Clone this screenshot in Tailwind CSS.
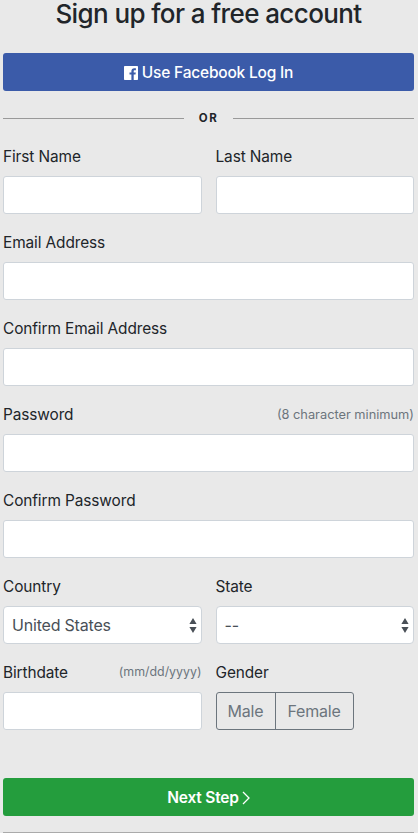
<!DOCTYPE html>
<html lang="en">
<head>
<meta charset="UTF-8">
<title>Sign up</title>
<script src="https://cdn.jsdelivr.net/npm/@tailwindcss/browser@4"></script>
</head>
<body class="bg-[#e9e9e9] overflow-hidden font-['Inter',sans-serif] text-[#212529]">
<div class="w-[418px] h-[833px] overflow-hidden pl-[3px] pr-[4px]">
  <h1 class="text-[26px] leading-[28px] font-medium text-center m-0 tracking-[-0.6px]">Sign up for a free account</h1>

  <button class="mt-[25px] w-full h-[38px] pt-[1px] rounded-[3px] bg-[#3b5ba9] text-white text-[15.5px] font-medium flex items-center justify-center gap-[4px] tracking-[-0.2px]">
    <svg width="14" height="14" viewBox="0 0 14 14"><path fill="#fff" d="M0.8 0h12.4a.8.8 0 0 1 .8.8v12.4a.8.8 0 0 1-.8.8H9.7V8.6h1.8l.3-2.1H9.7V5.2c0-.6.2-1 1-1h1.2V2.3c-.2 0-.9-.1-1.7-.1-1.7 0-2.8 1-2.8 2.9v1.4H5.5v2.1h1.9V14H.8a.8.8 0 0 1-.8-.8V.8A.8.8 0 0 1 .8 0z"/></svg>
    Use Facebook Log In
  </button>

  <div class="mt-[19px] h-[18px] flex items-center">
    <div class="flex-1 h-px bg-[#999] mb-[1px]"></div>
    <span class="w-[49px] text-center text-[11.5px] font-bold tracking-[1.6px]">OR</span>
    <div class="flex-1 h-px bg-[#999] mb-[1px]"></div>
  </div>

  <div class="mt-[19px] grid grid-cols-2 gap-x-[14px] gap-y-[19px]">
    <div>
      <label class="block text-[15.4px] leading-[20px] h-[29px] tracking-[-0.1px]">First Name</label>
      <input class="block w-full h-[38px] bg-white border border-[#ced4da] rounded-[3px]">
    </div>
    <div>
      <label class="block text-[15.4px] leading-[20px] h-[29px] tracking-[-0.1px]">Last Name</label>
      <input class="block w-full h-[38px] bg-white border border-[#ced4da] rounded-[3px]">
    </div>

    <div class="col-span-2">
      <label class="block text-[15.4px] leading-[20px] h-[29px] tracking-[-0.1px]">Email Address</label>
      <input class="block w-full h-[38px] bg-white border border-[#ced4da] rounded-[3px]">
    </div>

    <div class="col-span-2">
      <label class="block text-[15.4px] leading-[20px] h-[29px] tracking-[-0.1px]">Confirm Email Address</label>
      <input class="block w-full h-[38px] bg-white border border-[#ced4da] rounded-[3px]">
    </div>

    <div class="col-span-2">
      <div class="flex justify-between h-[29px]">
        <label class="text-[15.4px] leading-[20px] tracking-[-0.1px]">Password</label>
        <span class="text-[12.8px] leading-[20px] text-[#6c757d]">(8 character minimum)</span>
      </div>
      <input class="block w-full h-[38px] bg-white border border-[#ced4da] rounded-[3px]">
    </div>

    <div class="col-span-2">
      <label class="block text-[15.4px] leading-[20px] h-[29px] tracking-[-0.1px]">Confirm Password</label>
      <input class="block w-full h-[38px] bg-white border border-[#ced4da] rounded-[3px]">
    </div>

    <div>
      <label class="block text-[15.4px] leading-[20px] h-[29px] tracking-[-0.1px]">Country</label>
      <div class="flex items-center justify-between h-[38px] bg-white border border-[#ced4da] rounded-[4px] pl-[8px] pr-[4px] text-[16px] text-[#495057] tracking-[-0.2px]">
        <span>United States</span>
        <svg width="8" height="15" viewBox="0 0 8 15"><path fill="#495057" d="M4 0l3.6 6H.4zM4 15L.4 9h7.2z"/></svg>
      </div>
    </div>
    <div>
      <label class="block text-[15.4px] leading-[20px] h-[29px] tracking-[-0.1px]">State</label>
      <div class="flex items-center justify-between h-[38px] bg-white border border-[#ced4da] rounded-[4px] pl-[8px] pr-[4px] text-[16px] text-[#495057]">
        <span>--</span>
        <svg width="8" height="15" viewBox="0 0 8 15"><path fill="#495057" d="M4 0l3.6 6H.4zM4 15L.4 9h7.2z"/></svg>
      </div>
    </div>

    <div>
      <div class="flex justify-between h-[29px]">
        <label class="text-[15.4px] leading-[20px] tracking-[-0.1px]">Birthdate</label>
        <span class="text-[12.4px] leading-[18px] text-[#6c757d]">(mm/dd/yyyy)</span>
      </div>
      <input class="block w-full h-[38px] bg-white border border-[#ced4da] rounded-[3px]">
    </div>
    <div>
      <label class="block text-[15.4px] leading-[20px] h-[29px] tracking-[-0.1px]">Gender</label>
      <div class="flex w-[138px] h-[38px] border border-[#6c757d] rounded-[3px] text-[16px] text-[#6c757d] tracking-[-0.2px]">
        <span class="w-[59px] flex items-center justify-center border-r border-[#6c757d]">Male</span>
        <span class="flex-1 flex items-center justify-center">Female</span>
      </div>
    </div>
  </div>

  <button class="mt-[48px] w-full h-[38px] pt-[1px] rounded-[3px] bg-[#249d3d] text-white text-[15.5px] font-semibold flex items-center justify-center gap-[3px] tracking-[-0.2px]">
    Next Step
    <svg width="8" height="14" viewBox="0 0 8 14"><path fill="none" stroke="#fff" stroke-width="1.3" d="M1 1l6 6-6 6"/></svg>
  </button>
  <div class="mt-[16px] h-px bg-[#aaa]"></div>
</div>
</body>
</html>
